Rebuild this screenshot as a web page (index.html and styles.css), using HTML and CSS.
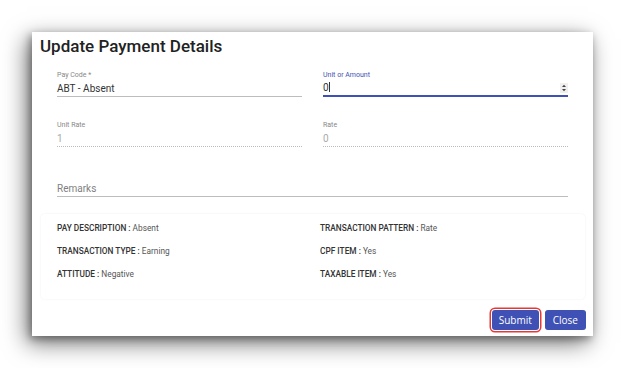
FILE: index.html
```html
<!DOCTYPE html>
<html>
<head>
    <title>Update Payment Details</title>
    <link rel="stylesheet" href="styles.css">
</head>
<body>
<div class="dialog">
    <h2 class="dialog-title">Update Payment Details</h2>
    <div class="form-grid">
        <div class="field">
            <label>Pay Code *</label>
            <div class="field-value">ABT - Absent</div>
        </div>
        <div class="field field-focused">
            <label>Unit or Amount</label>
            <div class="field-value">
                <span>0<span class="caret"></span></span>
                <svg class="spinner" width="8" height="10" viewBox="0 0 8 10">
                    <rect x="0" y="0" width="8" height="10" fill="#f0f0f0"/>
                    <path d="M2 4 L4 1.8 L6 4 Z M2 6 L4 8.2 L6 6 Z" fill="#444"/>
                </svg>
            </div>
        </div>
        <div class="field field-disabled">
            <label>Unit Rate</label>
            <div class="field-value">1</div>
        </div>
        <div class="field field-disabled">
            <label>Rate</label>
            <div class="field-value">0</div>
        </div>
        <div class="field field-wide">
            <label></label>
            <div class="field-value placeholder">Remarks</div>
        </div>
    </div>
    <div class="info-card">
        <div class="info-item"><b>PAY DESCRIPTION :</b> Absent</div>
        <div class="info-item"><b>TRANSACTION PATTERN :</b> Rate</div>
        <div class="info-item"><b>TRANSACTION TYPE :</b> Earning</div>
        <div class="info-item"><b>CPF ITEM :</b> Yes</div>
        <div class="info-item"><b>ATTITUDE :</b> Negative</div>
        <div class="info-item"><b>TAXABLE ITEM :</b> Yes</div>
    </div>
    <div class="dialog-actions">
        <button class="btn btn-focus">Submit</button>
        <button class="btn">Close</button>
    </div>
</div>
</body>
</html>
```

FILE: styles.css
```css
html, body {
    height: 100%;
}
body {
    margin: 0;
    padding: 32px 0 0 32px;
    box-sizing: border-box;
    background: #fff;
    font-family: Roboto, "Liberation Sans", sans-serif;
    color: #333;
}
.dialog {
    width: 561px;
    height: 304px;
    background: #fff;
    box-shadow: -5px 7px 22px rgba(0, 0, 0, 0.55), -2px 3px 8px rgba(0, 0, 0, 0.35);
    box-sizing: border-box;
}
.dialog-title {
    margin: 0;
    padding: 2px 8px 0;
    font-size: 17px;
    font-weight: 500;
    line-height: 24px;
    color: #222;
}
.form-grid {
    display: grid;
    grid-template-columns: 1fr 1fr;
    column-gap: 21px;
    row-gap: 24px;
    padding: 13px 25px 0 25px;
}
.field label {
    display: block;
    height: 9px;
    font-size: 7px;
    line-height: 9px;
    color: #888;
}
.field-value {
    display: flex;
    justify-content: space-between;
    align-items: center;
    height: 16px;
    font-size: 10px;
    color: #333;
    border-bottom: 1px solid #bdbdbd;
}
.field-wide {
    grid-column: 1 / 3;
}
.field-focused label {
    color: #3f51b5;
}
.field-focused .field-value {
    border-bottom: 2px solid #3f51b5;
    height: 15px;
}
.caret {
    display: inline-block;
    width: 1px;
    height: 10px;
    background: #333;
    vertical-align: -1px;
}
.field-disabled .field-value {
    color: #aaa;
    border-bottom: 1px dotted #bbb;
}
.placeholder {
    color: #808080;
}
.info-card {
    display: grid;
    grid-template-columns: 1fr 1fr;
    column-gap: 14px;
    row-gap: 10px;
    margin: 17px 8px 0 9px;
    padding: 8px 16px 18px;
    border-radius: 4px;
    box-shadow: 0 0 2px rgba(0, 0, 0, 0.08);
}
.info-item {
    font-size: 8.3px;
    line-height: 13px;
    color: #555;
}
.info-item b {
    font-weight: 500;
    color: #333;
}
.dialog-actions {
    display: flex;
    justify-content: flex-end;
    gap: 6px;
    padding: 11px 7px 0 0;
}
.btn {
    height: 20px;
    padding: 0 8px;
    background-color: #3f51b5;
    border: none;
    border-radius: 3px;
    color: white;
    font-family: "Open Sans", sans-serif;
    font-size: 10px;
    cursor: pointer;
}
.btn-focus {
    padding: 0 7px;
    box-shadow: 0 0 0 1px #fff, 0 0 0 2.5px #e53935;
}
```
